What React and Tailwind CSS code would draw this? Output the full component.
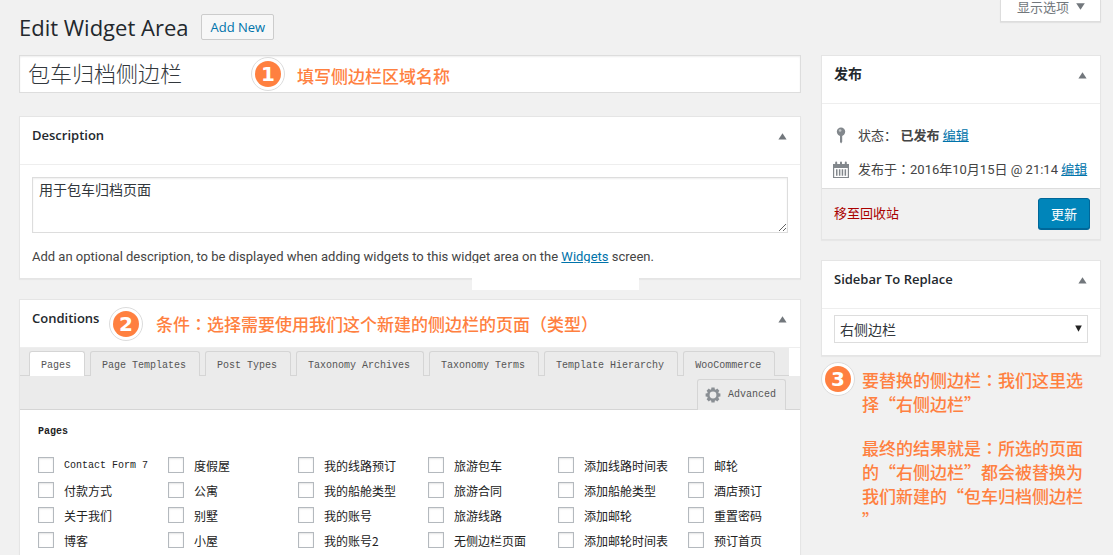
const sans = "font-['Open_Sans','Noto_Sans_CJK_SC',sans-serif]";
const cjk = "font-['Noto_Sans_CJK_SC',sans-serif]";
const mono = "font-['Liberation_Mono','Noto_Sans_CJK_SC',monospace]";

const tabs = [
  'Pages',
  'Page Templates',
  'Post Types',
  'Taxonomy Archives',
  'Taxonomy Terms',
  'Template Hierarchy',
  'WooCommerce',
];

const pages = [
  ['Contact Form 7', '度假屋', '我的线路预订', '旅游包车', '添加线路时间表', '邮轮'],
  ['付款方式', '公寓', '我的船舱类型', '旅游合同', '添加船舱类型', '酒店预订'],
  ['关于我们', '别墅', '我的账号', '旅游线路', '添加邮轮', '重置密码'],
  ['博客', '小屋', '我的账号2', '无侧边栏页面', '添加邮轮时间表', '预订首页'],
];

function Panel({ title, titleSize = 'text-[13px]', className = '', children }) {
  return (
    <section className={`relative border border-[#e5e5e5] bg-white shadow-[0_1px_1px_rgba(0,0,0,0.04)] ${className}`}>
      <header className="flex h-12 items-start justify-between border-b border-[#eee] pt-2 pr-[13px] pl-3">
        <h2 className={`${titleSize} leading-5 font-semibold text-[#23282d]`}>{title}</h2>
        <button type="button" aria-label={`Toggle ${title}`} className="mt-2">
          <svg width="9" height="7" viewBox="0 0 9 7" fill="#72777c">
            <path d="M4.5 0.3 8.6 6.6H0.4Z" />
          </svg>
        </button>
      </header>
      {children}
    </section>
  );
}

function Badge({ n }) {
  return (
    <span className="flex size-[34px] shrink-0 items-center justify-center rounded-full border border-[#dcdcdc] bg-white">
      <span className="flex size-[26px] items-center justify-center rounded-full bg-[#ff8040] font-['DejaVu_Sans',sans-serif] text-xl leading-5 font-bold text-white">
        {n}
      </span>
    </span>
  );
}

function Colon() {
  return <span className="font-['Noto_Sans_CJK_TC',sans-serif]" lang="zh-TW">：</span>;
}

const note = `${cjk} text-[17px] leading-6 font-medium text-[#ff8040]`;

export default function App() {
  return (
    <div lang="zh-CN" className={`${sans} flex min-h-screen gap-5 bg-[#f1f1f1] pr-3 pl-[19px] text-[13px] leading-5 text-[#444]`}>
      <main className="flex min-w-0 flex-1 flex-col">
        <div className="flex h-[55px] items-center gap-[13px] pb-px">
          <h1 className="text-[22px] leading-8 text-[#23282d]">Edit Widget Area</h1>
          <a href="#new" className="rounded-xs border border-[#ccc] bg-[#f7f7f7] px-2 py-[2px] leading-5 text-[#0073aa]">
            Add New
          </a>
        </div>

        <div className="relative">
          <input
            type="text"
            aria-label="Title"
            defaultValue="包车归档侧边栏"
            className={`${cjk} block h-[38px] w-full border border-[#ddd] bg-white px-2 pb-1 text-[22px] font-light text-[#32373c] shadow-[inset_0_1px_2px_rgba(0,0,0,0.07)]`}
          />
          <div className="pointer-events-none absolute top-[2px] left-[232px] flex items-center gap-3">
            <Badge n="1" />
            <p className={`${note} pt-1`}>填写侧边栏区域名称</p>
          </div>
        </div>

        <Panel title="Description" className="mt-[23px]">
          <div className="px-3 pt-3 pb-[11px]">
            <textarea
              aria-label="Description"
              defaultValue="用于包车归档页面"
              className={`${cjk} block h-14 w-full border border-[#ddd] bg-white px-1.5 py-px text-sm leading-5 text-[#32373c] shadow-[inset_0_1px_2px_rgba(0,0,0,0.07)]`}
            />
            <p className="mt-[14px] font-['Roboto',sans-serif] text-[13px] leading-5">
              Add an optional description, to be displayed when adding widgets to this widget area on the{' '}
              <a href="#widgets" className="text-[#0073aa] underline">Widgets</a> screen.
            </p>
          </div>
          <div className="absolute -bottom-3 left-[452px] h-[27px] w-[167px] bg-white" />
        </Panel>

        <Panel title="Conditions" className="mt-5 flex-1 border-b-0">
          <div className="pointer-events-none absolute top-[7px] left-[89px] flex items-center gap-[13px]">
            <Badge n="2" />
            <p className={note}>
              条件<Colon />选择需要使用我们这个新建的侧边栏的页面（类型）
            </p>
          </div>

          <div className={`${mono} text-[10px] text-[#555]`}>
            <div className="mr-[11px] flex h-7 items-end gap-[5px] border-b border-[#d5d5d5] bg-[#ebebeb] pl-[9px]">
              {tabs.map((tab, i) => (
                <button
                  key={tab}
                  type="button"
                  className={`-mb-px h-[25px] rounded-t-[3px] border border-b-0 border-[#d5d5d5] pt-[3px] pr-[13px] pl-[11px] whitespace-nowrap ${i === 0 ? 'bg-white' : 'bg-[#ebebeb]'}`}
                >
                  {tab}
                </button>
              ))}
            </div>
            <div className="flex h-[34px] items-end justify-end border-b border-[#d5d5d5] bg-[#ebebeb] pr-[14px]">
              <button
                type="button"
                className="-mb-px flex h-[31px] items-center gap-[7px] rounded-t-[3px] border border-b-0 border-[#d5d5d5] bg-[#ebebeb] pr-[9px] pl-[7px]"
              >
                <svg width="16" height="16" viewBox="0 0 16 16" fill="#8a8f94">
                  <path
                    fillRule="evenodd"
                    d="M6.2 2.300 6.400.6h3.200l.2 1.700 1 .4 1.400-1.100 2.200 2.200-1.100 1.400.4 1 1.700.2v3.200l-1.700.2-.4 1 1.100 1.400-2.200 2.200-1.400-1.100-1 .4-.2 1.700H6.400l-.2-1.700-1-.4-1.400 1.100-2.200-2.200 1.100-1.400-.4-1L.6 9.600V6.400l1.700-.2.4-1L1.600 3.800l2.200-2.200 1.400 1.100ZM8 4.600a3.400 3.400 0 1 0 0 6.800 3.400 3.400 0 0 0 0-6.800Z"
                  />
                </svg>
                Advanced
              </button>
            </div>
          </div>

          <div className={`${mono} pt-3 pl-[18px] text-[#222]`}>
            <h3 className="text-[10px] leading-5 font-bold">Pages</h3>
            <div className="mt-[10px] grid grid-cols-[repeat(6,130px)]">
              {pages.flat().map((name) => (
                <label key={name} className="flex h-[25px] items-center gap-[10px] whitespace-nowrap">
                  <input
                    type="checkbox"
                    className="size-4 shrink-0 appearance-none border border-[#b4b9be] bg-white shadow-[inset_0_1px_2px_rgba(0,0,0,0.1)]"
                  />
                  <span className={name.startsWith('Contact') ? 'pt-0.5 text-[10px]' : `${cjk} pt-0.5 text-xs`}>{name}</span>
                </label>
              ))}
            </div>
          </div>
        </Panel>
      </main>

      <aside className="w-[280px] shrink-0">
        <div className="flex h-[55px] items-start justify-end">
          <button
            type="button"
            className="flex h-[22px] items-start gap-[7px] border border-t-0 border-[#ddd] bg-white pr-[15px] pl-4 text-[13px] leading-[14px] text-[#72777c] shadow-[0_1px_1px_rgba(0,0,0,0.06)]"
          >
            显示选项
            <svg className="mt-[3px]" width="9" height="7" viewBox="0 0 9 7" fill="#72777c">
              <path d="M0.200 0.300h8.600L4.500 6.700Z" />
            </svg>
          </button>
        </div>

        <Panel title="发布" titleSize="text-sm">
          <div className="flex flex-col gap-[14px] pt-[21px] pb-2 pl-[10px] whitespace-nowrap">
            <div className="flex items-center gap-2">
              <svg width="18" height="18" viewBox="0 0 18 18" fill="#82878c">
                <circle cx="9" cy="5.700" r="4.200" />
                <path d="M8 9h2.200v6.700L9.100 17.500 8 16Z" />
                <circle cx="8.100" cy="4.500" r="1.300" fill="#c4c7c9" />
              </svg>
              <p>
                状态： <strong className="font-semibold">已发布</strong>{' '}
                <a href="#status" className="text-[#0073aa] underline">编辑</a>
              </p>
            </div>
            <div className="flex items-center gap-2">
              <svg width="18" height="18" viewBox="0 0 18 18" fill="#82878c">
                <path
                  fillRule="evenodd"
                  d="M1 3h2.200V1.500a1 1 0 0 1 2 0V3H8V1.500a1 1 0 0 1 2 0V3h2.800V1.500a1 1 0 0 1 2 0V3H17v14H1ZM2.200 7v8.900h13.600V7ZM4 8.300h1.500v6.500H4Zm2.900 0h1.500v6.500H6.900Zm2.800 0h1.500v6.500H9.700Zm2.900 0h1.500v6.500h-1.500Z"
                />
              </svg>
              <p className="font-['Roboto','Noto_Sans_CJK_SC',sans-serif]">
                发布于<Colon />2016年10月15日 @ 21:14{' '}
                <a href="#date" className="text-[#0073aa] underline">编辑</a>
              </p>
            </div>
          </div>
          <div className="flex items-start justify-between border-t border-[#ddd] bg-[#f1f1f1] pt-[9px] pr-[10px] pb-[10px] pl-3">
            <a href="#trash" className="mt-[5px] text-[#a00]">移至回收站</a>
            <button
              type="button"
              className="h-[31px] rounded-[3px] border border-[#006799] bg-[#0085ba] px-3 text-[13px] text-white shadow-[0_1px_0_#006799]"
            >
              更新
            </button>
          </div>
        </Panel>

        <Panel title="Sidebar To Replace" className="mt-5">
          <div className="relative px-3 pt-[6px] pb-3">
            <select
              aria-label="Sidebar To Replace"
              className={`${cjk} block h-7 w-full appearance-none border border-[#ddd] bg-white px-[5px] text-sm leading-5 text-[#32373c]`}
            >
              <option>右侧边栏</option>
            </select>
            <svg className="pointer-events-none absolute top-4 right-[18px]" width="7" height="7" viewBox="0 0 7 7" fill="#222">
              <path d="M0.200 0.500h6.600L3.500 6.700Z" />
            </svg>
          </div>
        </Panel>

        <div className="mt-[6px] flex items-start gap-[7px]">
          <Badge n="3" />
          <div className={`${note} flex flex-col gap-5 pt-[6px] whitespace-nowrap`}>
            <p>
              要替换的侧边栏<Colon />我们这里选<br />
              择“右侧边栏”
            </p>
            <p>
              最终的结果就是<Colon />所选的页面<br />
              的“右侧边栏”都会被替换为<br />
              我们新建的“包车归档侧边栏<br />
              ”
            </p>
          </div>
        </div>
      </aside>
    </div>
  );
}
